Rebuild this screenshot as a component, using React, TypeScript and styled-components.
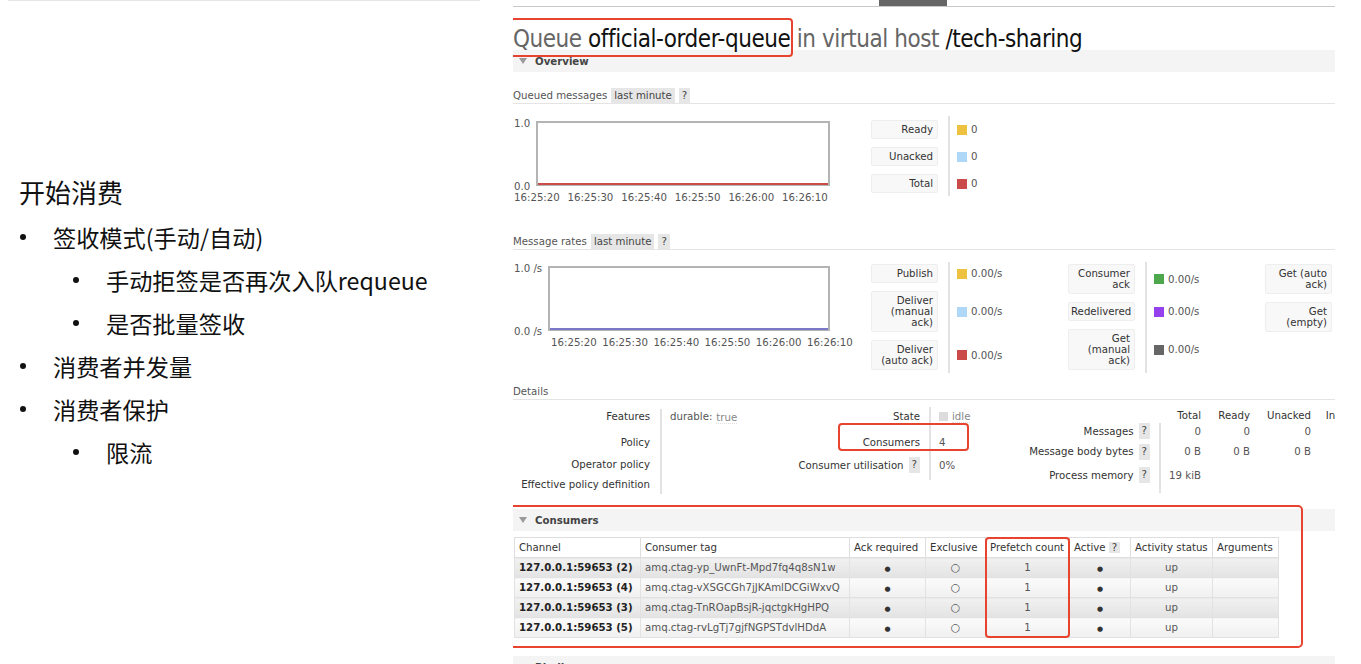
import React from "react";
import styled, { createGlobalStyle } from "styled-components";

const GlobalStyle = createGlobalStyle`
  html, body { margin: 0; padding: 0; background: #fff; }
  body { overflow: hidden; font-family: "DejaVu Sans", Verdana, sans-serif; }
  * { box-sizing: border-box; }
`;

const Page = styled.div`
  display: flex;
  width: 1361px;
  height: 664px;
  overflow: hidden;
  background: #fff;
`;

/* ---------- left slide ---------- */
const Slide = styled.section`
  flex: none;
  width: 505px;
  font-family: "Noto Sans CJK SC", "Microsoft YaHei", sans-serif;
  color: #111;
`;

const SlideRule = styled.div`
  margin-left: 8px;
  width: 472px;
  height: 1px;
  background: #e6e6e6;
`;

const SlideTitle = styled.h2`
  margin: 168px 0 0 19px;
  font-size: 26px;
  font-weight: 400;
  line-height: 46px;
`;

const Bullets = styled.ul`
  list-style: none;
  margin: 0;
  padding: 0;
`;

const Bullet = styled.li<{ $level: 1 | 2 }>`
  display: flex;
  align-items: center;
  height: 43px;
  padding-left: ${(p) => (p.$level === 1 ? 20 : 73)}px;
  font-size: 23.2px;
  white-space: nowrap;
  &::before {
    content: "";
    flex: none;
    width: 6px;
    height: 6px;
    border-radius: 50%;
    background: #111;
    margin-right: 27px;
  }
`;

/* ---------- right console ---------- */
const Console = styled.main`
  flex: none;
  width: 822px;
  margin-left: 8px;
  overflow: hidden;
  font-size: 10.2px;
  color: #444;
`;

const TopStrip = styled.div`
  height: 7px;
  border-bottom: 1px solid #c8c8c8;
  padding-left: 366px;
`;

const ActiveTab = styled.div`
  width: 68px;
  height: 6px;
  background: #666;
`;

const Title = styled.h1`
  margin: 0;
  height: 43px;
  padding-top: 19px;
  font-family: "Liberation Sans Narrow", "DejaVu Sans Condensed", "Liberation Sans", sans-serif;
  font-size: 24px;
  letter-spacing: -0.45px;
  font-weight: 400;
  line-height: 26px;
  color: #666;
  white-space: nowrap;
`;

const Strong = styled.span`
  color: #111;
`;

const Highlight = styled.span`
  position: relative;
  display: inline-block;
  &::after {
    content: "";
    position: absolute;
    left: -3px;
    right: -3px;
    top: -8px;
    bottom: -5px;
    border: 2px solid #e8432e;
    border-radius: 4px;
    pointer-events: none;
  }
`;

const SectionBar = styled.h2<{ $mt?: number }>`
  margin: ${(p) => p.$mt ?? 0}px 0 0;
  height: 22px;
  display: flex;
  align-items: center;
  gap: 8px;
  padding-left: 6px;
  background: #f4f4f4;
  font-size: 10.2px;
  font-weight: 700;
  color: #444;
  &::before {
    content: "";
    width: 0;
    height: 0;
    border-left: 4px solid transparent;
    border-right: 4px solid transparent;
    border-top: 6px solid #9a9a9a;
  }
`;

const SubHeading = styled.div<{ $mt: number }>`
  margin-top: ${(p) => p.$mt}px;
  height: 17px;
  display: flex;
  align-items: center;
  gap: 4px;
  padding-top: 1px;
  border-bottom: 1px solid #e4e4e4;
  color: #555;
`;

const Tag = styled.span`
  background: #e6e6e6;
  padding: 1px 3px;
  line-height: 14px;
  color: #444;
`;

const Help = styled.span`
  background: #e6e6e6;
  padding: 0 3px;
  line-height: 16px;
  color: #444;
`;

const ChartRow = styled.div<{ $mt: number }>`
  margin-top: ${(p) => p.$mt}px;
  display: flex;
  align-items: flex-start;
`;

const ChartSvg = styled.svg`
  flex: none;
  display: block;
  text {
    font-family: "DejaVu Sans", Verdana, sans-serif;
    font-size: 10.2px;
    fill: #555;
  }
`;

const LegendGroups = styled.div<{ $mt: number }>`
  display: flex;
  align-items: flex-start;
  margin-top: ${(p) => p.$mt}px;
`;

const Legend = styled.div`
  flex: none;
  display: grid;
  align-content: start;
  grid-template-columns: 67px 10px 2px 7px 111px;
  row-gap: 8px;
`;

const LegendLabel = styled.div`
  grid-column: 1;
  background: #f8f8f8;
  border: 1px solid #eeeeee;
  border-radius: 2px;
  padding: 3px 4px 3px 2px;
  text-align: right;
  line-height: 11px;
  color: #333;
  white-space: nowrap;
`;

const LegendValue = styled.div`
  grid-column: 5;
  display: flex;
  align-items: center;
  gap: 4px;
  color: #555;
`;

const Swatch = styled.span<{ $color: string }>`
  width: 10px;
  height: 10px;
  background: ${(p) => p.$color};
`;

const LegendSep = styled.div<{ $rows: number; $top: number; $bottom: number }>`
  grid-column: 3;
  grid-row: 1 / span ${(p) => p.$rows};
  background: #e2e2e2;
  margin: -${(p) => p.$top}px 0 -${(p) => p.$bottom}px;
`;

const DetailsRow = styled.div`
  display: flex;
  align-items: flex-start;
  margin-top: 3px;
`;

const KVTable = styled.div<{ $cols: string; $rows: string; $width: number; $mt?: number }>`
  flex: none;
  display: grid;
  width: ${(p) => p.$width}px;
  margin-top: ${(p) => p.$mt ?? 0}px;
  grid-template-columns: ${(p) => p.$cols};
  grid-template-rows: ${(p) => p.$rows};
`;

const KLabel = styled.div<{ $mark?: boolean }>`
  grid-column: 1;
  position: relative;
  display: flex;
  align-items: center;
  justify-content: flex-end;
  gap: 5px;
  color: #333;
  white-space: nowrap;
  &::after {
    content: "";
    display: ${(p) => (p.$mark ? "block" : "none")};
    position: absolute;
    left: 45px;
    right: -49px;
    top: -6px;
    bottom: 4px;
    border: 2px solid #e8432e;
    border-radius: 4px;
    pointer-events: none;
  }
`;

const KValue = styled.div<{ $col?: number; $right?: boolean }>`
  grid-column: ${(p) => p.$col ?? 5};
  display: flex;
  align-items: center;
  justify-content: ${(p) => (p.$right ? "flex-end" : "flex-start")};
  gap: 4px;
  color: #555;
  white-space: nowrap;
`;

const KHead = styled(KValue)`
  color: #333;
`;

const KSep = styled.div<{ $from?: number; $mt?: number; $mb?: number }>`
  grid-column: 3;
  grid-row: ${(p) => p.$from ?? 1} / -1;
  background: #e2e2e2;
  margin: ${(p) => p.$mt ?? 0}px 0 ${(p) => p.$mb ?? 0}px;
`;

const Muted = styled.span`
  color: #888;
  border-bottom: 1px dotted #ddd;
  margin-top: 2px;
`;

const StateBox = styled.span`
  width: 9px;
  height: 9px;
  background: #dcdcdc;
`;

const ConsumersBlock = styled.section`
  position: relative;
  margin-top: 15px;
  &::after {
    content: "";
    position: absolute;
    left: -9px;
    right: 32px;
    top: -4px;
    bottom: -10px;
    border: 2px solid #e8432e;
    border-radius: 5px;
    pointer-events: none;
  }
`;

const TableWrap = styled.div`
  position: relative;
  width: 764px;
  margin: 6px 0 0 1px;
`;

const PrefetchMark = styled.div`
  position: absolute;
  left: 471px;
  top: 0;
  width: 85px;
  height: 101px;
  border: 2px solid #e8432e;
  border-radius: 4px;
  pointer-events: none;
`;

const Table = styled.table`
  width: 764px;
  table-layout: fixed;
  border-collapse: collapse;
  font-size: 10.2px;
`;

const Th = styled.th`
  height: 20px;
  padding: 0 4px;
  border: 1px solid #dedede;
  background: #fff;
  font-weight: 400;
  text-align: left;
  color: #333;
  white-space: nowrap;
  overflow: hidden;
`;

const Tr = styled.tr<{ $alt: boolean }>`
  td {
    background: ${(p) =>
      p.$alt
        ? "linear-gradient(#fbfbfb, #f0f0f0)"
        : "linear-gradient(#f1f1f1, #e3e3e3)"};
  }
`;

const Td = styled.td<{ $center?: boolean; $bold?: boolean }>`
  height: 20px;
  padding: 0 4px;
  border: 1px solid #e2e2e2;
  text-align: ${(p) => (p.$center ? "center" : "left")};
  font-weight: ${(p) => (p.$bold ? 700 : 400)};
  color: ${(p) => (p.$bold ? "#222" : "#555")};
  white-space: nowrap;
  overflow: hidden;
`;

const Dot = styled.span`
  font-size: 7px;
  color: #333;
`;

const Ring = styled.span`
  font-size: 11px;
  color: #555;
`;

/* ---------- data ---------- */
const times = ["16:25:20", "16:25:30", "16:25:40", "16:25:50", "16:26:00", "16:26:10"];

function Chart(props: {
  plotLeft: number;
  top: string;
  bottom: string;
  timesStart: number;
  timesStep: number;
  lineColor: string;
}) {
  const { plotLeft, top, bottom, timesStart, timesStep, lineColor } = props;
  return (
    <ChartSvg width={358} height={90} viewBox="0 0 358 90">
      <text x={1} y={9.6}>{top}</text>
      <text x={1} y={72.6}>{bottom}</text>
      <rect
        x={plotLeft + 1}
        y={5}
        width={315 - plotLeft}
        height={63}
        fill="#fff"
        stroke="#b4b4b4"
        strokeWidth={2}
      />
      <line x1={plotLeft + 2} x2={315} y1={67} y2={67} stroke={lineColor} strokeWidth={2} />
      {times.map((t, i) => (
        <text key={t} x={timesStart + i * timesStep} y={83.6}>
          {t}
        </text>
      ))}
    </ChartSvg>
  );
}

type LegendItem = { label: string[]; color?: string; value?: string };

function LegendBlock({ items, top, bottom }: { items: LegendItem[]; top: number; bottom: number }) {
  return (
    <Legend>
      <LegendSep $rows={items.length} $top={top} $bottom={bottom} />
      {items.map((it) => (
        <React.Fragment key={it.label.join(" ")}>
          <LegendLabel>
            {it.label.map((l, i) => (
              <React.Fragment key={l}>
                {i > 0 && <br />}
                {l}
              </React.Fragment>
            ))}
          </LegendLabel>
          <LegendValue>
            {it.color && <Swatch $color={it.color} />}
            {it.value}
          </LegendValue>
        </React.Fragment>
      ))}
    </Legend>
  );
}

const queued: LegendItem[] = [
  { label: ["Ready"], color: "#edc240", value: "0" },
  { label: ["Unacked"], color: "#afd8f8", value: "0" },
  { label: ["Total"], color: "#cb4b4b", value: "0" },
];

const rates1: LegendItem[] = [
  { label: ["Publish"], color: "#edc240", value: "0.00/s" },
  { label: ["Deliver", "(manual", "ack)"], color: "#afd8f8", value: "0.00/s" },
  { label: ["Deliver", "(auto ack)"], color: "#cb4b4b", value: "0.00/s" },
];
const rates2: LegendItem[] = [
  { label: ["Consumer", "ack"], color: "#4da74d", value: "0.00/s" },
  { label: ["Redelivered"], color: "#9440ed", value: "0.00/s" },
  { label: ["Get", "(manual", "ack)"], color: "#666666", value: "0.00/s" },
];
const rates3: LegendItem[] = [
  { label: ["Get (auto", "ack)"], color: "#8cacc6", value: "0.00/s" },
  { label: ["Get", "(empty)"], color: "#bd9b33", value: "0.00/s" },
];

const consumers = [
  ["127.0.0.1:59653 (2)", "amq.ctag-yp_UwnFt-Mpd7fq4q8sN1w"],
  ["127.0.0.1:59653 (4)", "amq.ctag-vXSGCGh7jJKAmlDCGiWxvQ"],
  ["127.0.0.1:59653 (3)", "amq.ctag-TnROapBsjR-jqctgkHgHPQ"],
  ["127.0.0.1:59653 (5)", "amq.ctag-rvLgTj7gjfNGPSTdvlHDdA"],
];

const colWidths = [126, 209, 76, 60, 84, 61, 82, 66];

export default function App() {
  return (
    <>
      <GlobalStyle />
      <Page>
        <Slide>
          <SlideRule />
          <SlideTitle>开始消费</SlideTitle>
          <Bullets>
            <Bullet $level={1}>签收模式(手动/自动)</Bullet>
            <Bullet $level={2}>手动拒签是否再次入队requeue</Bullet>
            <Bullet $level={2}>是否批量签收</Bullet>
            <Bullet $level={1}>消费者并发量</Bullet>
            <Bullet $level={1}>消费者保护</Bullet>
            <Bullet $level={2}>限流</Bullet>
          </Bullets>
        </Slide>

        <Console>
          <TopStrip>
            <ActiveTab />
          </TopStrip>
          <Title>
            <Highlight>
              Queue <Strong>official-order-queue</Strong>
            </Highlight>{" "}
            in virtual host <Strong>/tech-sharing</Strong>
          </Title>

          <SectionBar>Overview</SectionBar>

          <SubHeading $mt={15}>
            Queued messages <Tag>last minute</Tag>
            <Tag>?</Tag>
          </SubHeading>
          <ChartRow $mt={13}>
            <Chart plotLeft={23} top="1.0" bottom="0.0" timesStart={1} timesStep={53.6} lineColor="#cb4b4b" />
            <LegendGroups $mt={3}>
              <LegendBlock items={queued} top={4} bottom={3} />
            </LegendGroups>
          </ChartRow>

          <SubHeading $mt={26}>
            Message rates <Tag>last minute</Tag>
            <Tag>?</Tag>
          </SubHeading>
          <ChartRow $mt={12}>
            <Chart plotLeft={35} top="1.0 /s" bottom="0.0 /s" timesStart={38} timesStep={51.2} lineColor="#7b78c8" />
            <LegendGroups $mt={2}>
              <LegendBlock items={rates1} top={2} bottom={3} />
              <LegendBlock items={rates2} top={2} bottom={3} />
              <LegendBlock items={rates3} top={2} bottom={3} />
            </LegendGroups>
          </ChartRow>

          <SubHeading $mt={13}>Details</SubHeading>
          <DetailsRow>
            <KVTable $width={280} $cols="137px 10px 2px 8px 1fr" $rows="27px 24px 20px 20px">
              <KSep $mt={6} />
              <KLabel>Features</KLabel>
              <KValue>
                durable: <Muted>true</Muted>
              </KValue>
              <KLabel>Policy</KLabel>
              <KValue />
              <KLabel>Operator policy</KLabel>
              <KValue />
              <KLabel>Effective policy definition</KLabel>
              <KValue />
            </KVTable>

            <KVTable $width={207} $cols="127px 9px 2px 8px 1fr" $rows="26px 26px 20px">
              <KSep $mt={4} $mb={-5} />
              <KLabel>State</KLabel>
              <KValue>
                <StateBox />
                <Muted>idle</Muted>
              </KValue>
              <KLabel $mark>Consumers</KLabel>
              <KValue>4</KValue>
              <KLabel>
                Consumer utilisation <Help>?</Help>
              </KLabel>
              <KValue>0%</KValue>
            </KVTable>

            <KVTable
              $width={381}
              $mt={5}
              $cols="150px 9px 2px 0px 40px 49px 61px 70px"
              $rows="15px 16px 25px 22px"
            >
              <KSep $from={2} $mb={-7} />
              <KLabel />
              <KHead $right>Total</KHead>
              <KHead $col={6} $right>Ready</KHead>
              <KHead $col={7} $right>Unacked</KHead>
              <KHead $col={8} $right>In memory</KHead>
              <KLabel>
                Messages <Help>?</Help>
              </KLabel>
              <KValue $right>0</KValue>
              <KValue $col={6} $right>0</KValue>
              <KValue $col={7} $right>0</KValue>
              <KValue $col={8} $right>0</KValue>
              <KLabel>
                Message body bytes <Help>?</Help>
              </KLabel>
              <KValue $right>0 B</KValue>
              <KValue $col={6} $right>0 B</KValue>
              <KValue $col={7} $right>0 B</KValue>
              <KValue $col={8} $right>0 B</KValue>
              <KLabel>
                Process memory <Help>?</Help>
              </KLabel>
              <KValue $right>19 kiB</KValue>
            </KVTable>
          </DetailsRow>

          <ConsumersBlock>
            <SectionBar>Consumers</SectionBar>
            <TableWrap>
              <Table>
                <colgroup>
                  {colWidths.map((w, i) => (
                    <col key={i} style={{ width: w }} />
                  ))}
                </colgroup>
                <thead>
                  <tr>
                    <Th>Channel</Th>
                    <Th>Consumer tag</Th>
                    <Th>Ack required</Th>
                    <Th>Exclusive</Th>
                    <Th>Prefetch count</Th>
                    <Th>
                      Active <Help>?</Help>
                    </Th>
                    <Th>Activity status</Th>
                    <Th>Arguments</Th>
                  </tr>
                </thead>
                <tbody>
                  {consumers.map(([ch, tag], i) => (
                    <Tr key={ch} $alt={i % 2 === 1}>
                      <Td $bold>{ch}</Td>
                      <Td>{tag}</Td>
                      <Td $center>
                        <Dot>●</Dot>
                      </Td>
                      <Td $center>
                        <Ring>○</Ring>
                      </Td>
                      <Td $center>1</Td>
                      <Td $center>
                        <Dot>●</Dot>
                      </Td>
                      <Td $center>up</Td>
                      <Td />
                    </Tr>
                  ))}
                </tbody>
              </Table>
              <PrefetchMark />
            </TableWrap>
          </ConsumersBlock>

          <SectionBar $mt={18}>Bindings</SectionBar>
        </Console>
      </Page>
    </>
  );
}
